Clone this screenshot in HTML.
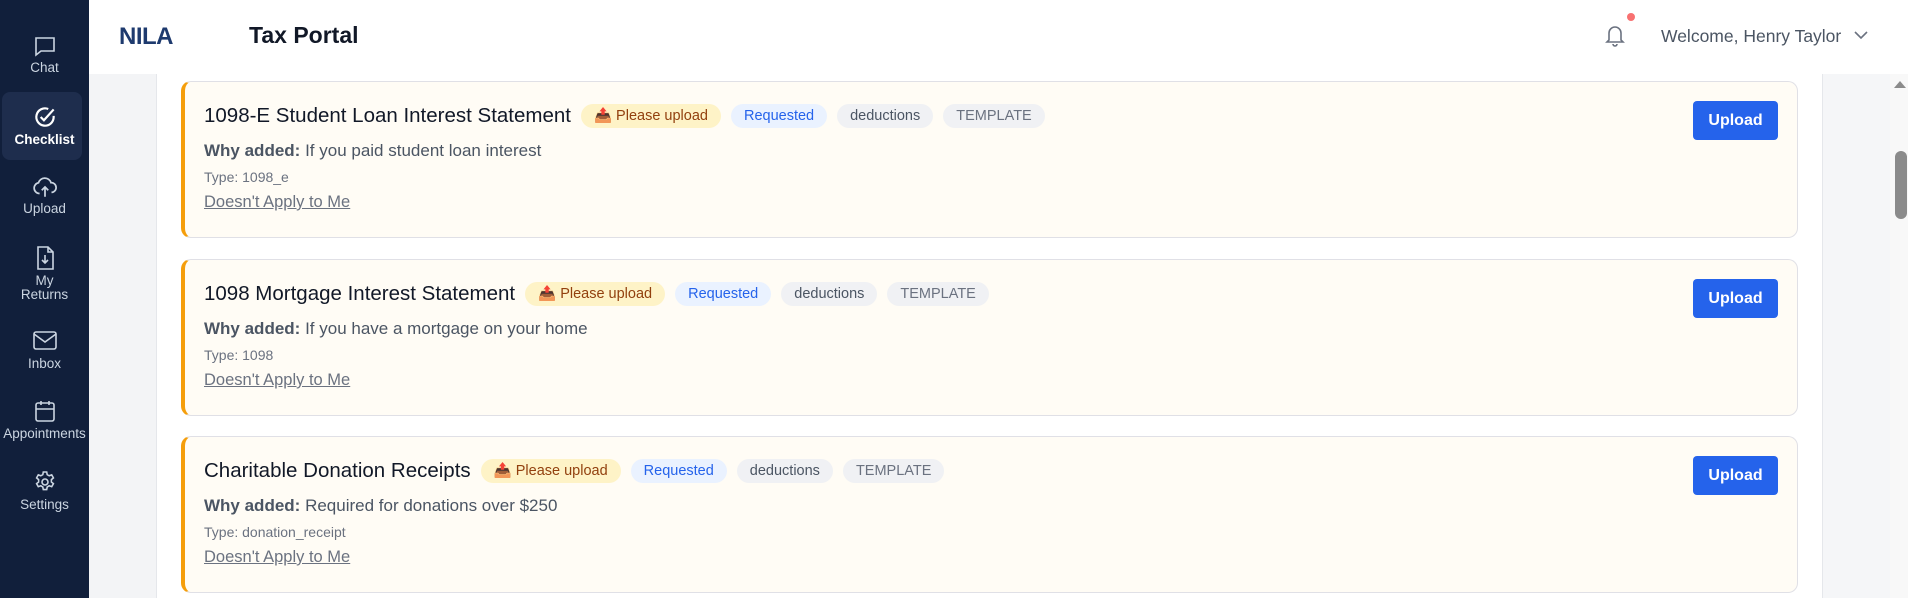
<!DOCTYPE html>
<html><head><meta charset="utf-8"><style>
*{box-sizing:border-box;margin:0;padding:0}
body{width:1908px;height:598px;overflow:hidden;font-family:"Liberation Sans",sans-serif;background:#fff;position:relative}
.side{position:absolute;left:0;top:0;width:89px;height:598px;background:#111f3b}
.it{position:absolute;left:0;width:89px;text-align:center;color:#cbd5e1;font-size:13.5px}
.it svg{display:block;margin:0 auto}
.act{position:absolute;left:2px;top:92px;width:80px;height:68px;background:#1e2d4d;border-radius:8px}
.hdr{position:absolute;left:89px;top:0;right:0;height:74px;background:#fff}
.gut{position:absolute;left:89px;top:74px;width:68px;bottom:0;background:#f3f4f6;border-right:1px solid #e5e7eb}
.rg{position:absolute;left:1822px;top:74px;width:68px;bottom:0;background:#f5f6f8;border-left:1px solid #e5e7eb}
.sb{position:absolute;left:1890px;top:74px;width:18px;bottom:0;background:#f8f8f8}
.card{position:absolute;left:181px;width:1617px;height:157px;background:#fffcf5;border:1px solid #e0e0e6;border-left:4px solid #f59e0b;border-radius:10px}
.t{position:absolute;left:19px;top:22px;display:flex;align-items:center;white-space:nowrap}
.t h3{font-size:20.5px;font-weight:500;color:#111827;margin-right:10px}
.b{height:24px;line-height:24px;border-radius:12px;padding:0 13px;font-size:14.5px;margin-right:10px}
.w{position:absolute;left:19px;top:59px;font-size:17px;color:#4b5563}
.w b{font-weight:600}
.ty{position:absolute;left:19px;top:87px;font-size:14px;color:#6b7280}
.d{position:absolute;left:19px;top:111px;font-size:16.5px;color:#6b7280;text-decoration:underline}
.up{position:absolute;left:1508px;top:19px;width:85px;height:39px;background:#2563eb;border-radius:4px;color:#fff;font-weight:bold;font-size:16px;text-align:center;line-height:39px}
</style></head><body>
<div class="side">
<div class="act"></div>
<div class="it" style="top:34px"><svg width="24" height="24" viewBox="0 0 24 24" fill="none" stroke="#cbd5e1" stroke-width="1.6"><path d="M3 4h18v13H8l-5 4z"/></svg><div style="margin-top:2px">Chat</div></div>
<div class="it" style="top:104px;color:#fff;font-weight:bold"><svg width="26" height="26" viewBox="0 0 24 24" fill="none" stroke="#fff" stroke-width="2"><path d="M20 11v1a8 8 0 1 1-5-7.4"/><path d="M8 12l3 3 9-10"/></svg><div style="margin-top:2px">Checklist</div></div>
<div class="it" style="top:174px"><svg width="26" height="26" viewBox="0 0 24 24" fill="none" stroke="#cbd5e1" stroke-width="1.6"><path d="M7 18a5 5 0 0 1-1-9.9A6 6 0 0 1 17.5 8 4.5 4.5 0 0 1 18 17"/><path d="M12 21v-9M9 15l3-3 3 3"/></svg><div style="margin-top:1px">Upload</div></div>
<div class="it" style="top:245px;line-height:14px"><svg width="24" height="26" viewBox="0 0 24 26" fill="none" stroke="#cbd5e1" stroke-width="1.6"><path d="M5 2h10l5 5v17H5z"/><path d="M15 2v5h5M12 10v8M9 15l3 3 3-3"/></svg><div style="margin-top:3px">My<br>Returns</div></div>
<div class="it" style="top:329px"><svg width="26" height="24" viewBox="0 0 26 24" fill="none" stroke="#cbd5e1" stroke-width="1.6"><rect x="2" y="3" width="22" height="17" rx="2"/><path d="M2 5l11 8 11-8"/></svg><div style="margin-top:3px">Inbox</div></div>
<div class="it" style="top:399px"><svg width="24" height="24" viewBox="0 0 24 24" fill="none" stroke="#cbd5e1" stroke-width="1.6"><rect x="3" y="4" width="18" height="18" rx="2"/><path d="M3 10h18M8 2v4M16 2v4"/></svg><div style="margin-top:3px;margin-left:-6px;margin-right:-6px">Appointments</div></div>
<div class="it" style="top:470px"><svg width="24" height="24" viewBox="0 0 24 24" fill="none" stroke="#cbd5e1" stroke-width="1.6"><circle cx="12" cy="12" r="3"/><path d="M10.3 2h3.4l.5 2.6 2 1.2 2.5-.9 1.7 3-2 1.7v2.4l2 1.7-1.7 3-2.5-.9-2 1.2-.5 2.6h-3.4l-.5-2.6-2-1.2-2.5.9-1.7-3 2-1.7v-2.4l-2-1.7 1.7-3 2.5.9 2-1.2z"/></svg><div style="margin-top:3px">Settings</div></div>
</div>
<div class="hdr">
<div style="position:absolute;left:30px;top:23px;font-size:24px;font-weight:bold;color:#1e3a6e;letter-spacing:-0.5px">NILA</div>
<div style="position:absolute;left:160px;top:22px;font-size:23px;font-weight:bold;color:#111827">Tax Portal</div>
<svg style="position:absolute;left:1514px;top:22px" width="24" height="26" viewBox="0 0 24 26" fill="none" stroke="#6b7280" stroke-width="1.6"><path d="M6 18V11a6 6 0 0 1 12 0v7l2 2H4z"/><path d="M10 22a2 2 0 0 0 4 0"/></svg>
<div style="position:absolute;left:1538px;top:13px;width:8px;height:8px;border-radius:50%;background:#f87171"></div>
<div style="position:absolute;left:1572px;top:26px;font-size:17.5px;color:#4b5563">Welcome, Henry Taylor</div>
<svg style="position:absolute;left:1765px;top:30px" width="14" height="10" viewBox="0 0 14 10" fill="none" stroke="#6b7280" stroke-width="1.6"><path d="M1 2l6 6 6-6"/></svg>
</div>
<div class="gut"></div><div class="rg"></div>
<div class="sb"><div style="position:absolute;left:4px;top:7px;width:0;height:0;border-left:6px solid transparent;border-right:6px solid transparent;border-bottom:7px solid #8b8b8b"></div><div style="position:absolute;left:5px;top:77px;width:12px;height:68px;border-radius:6px;background:#8b8b8b"></div></div>

<div class="card" style="top:81px"><div class="t"><h3>1098-E Student Loan Interest Statement</h3><span class="b" style="background:#fef3c7;color:#92400e">📤 Please upload</span><span class="b" style="background:#eaf2ff;color:#2563eb">Requested</span><span class="b" style="background:#f0f1f4;color:#4b5563">deductions</span><span class="b" style="background:#f0f1f4;color:#6b7280">TEMPLATE</span></div>
<div class="w"><b>Why added:</b> If you paid student loan interest</div><div class="ty">Type: 1098_e</div><div class="d">Doesn't Apply to Me</div><div class="up">Upload</div></div>

<div class="card" style="top:259px"><div class="t"><h3>1098 Mortgage Interest Statement</h3><span class="b" style="background:#fef3c7;color:#92400e">📤 Please upload</span><span class="b" style="background:#eaf2ff;color:#2563eb">Requested</span><span class="b" style="background:#f0f1f4;color:#4b5563">deductions</span><span class="b" style="background:#f0f1f4;color:#6b7280">TEMPLATE</span></div>
<div class="w"><b>Why added:</b> If you have a mortgage on your home</div><div class="ty">Type: 1098</div><div class="d">Doesn't Apply to Me</div><div class="up">Upload</div></div>

<div class="card" style="top:436px"><div class="t"><h3>Charitable Donation Receipts</h3><span class="b" style="background:#fef3c7;color:#92400e">📤 Please upload</span><span class="b" style="background:#eaf2ff;color:#2563eb">Requested</span><span class="b" style="background:#f0f1f4;color:#4b5563">deductions</span><span class="b" style="background:#f0f1f4;color:#6b7280">TEMPLATE</span></div>
<div class="w"><b>Why added:</b> Required for donations over $250</div><div class="ty">Type: donation_receipt</div><div class="d">Doesn't Apply to Me</div><div class="up">Upload</div></div>
</body></html>
